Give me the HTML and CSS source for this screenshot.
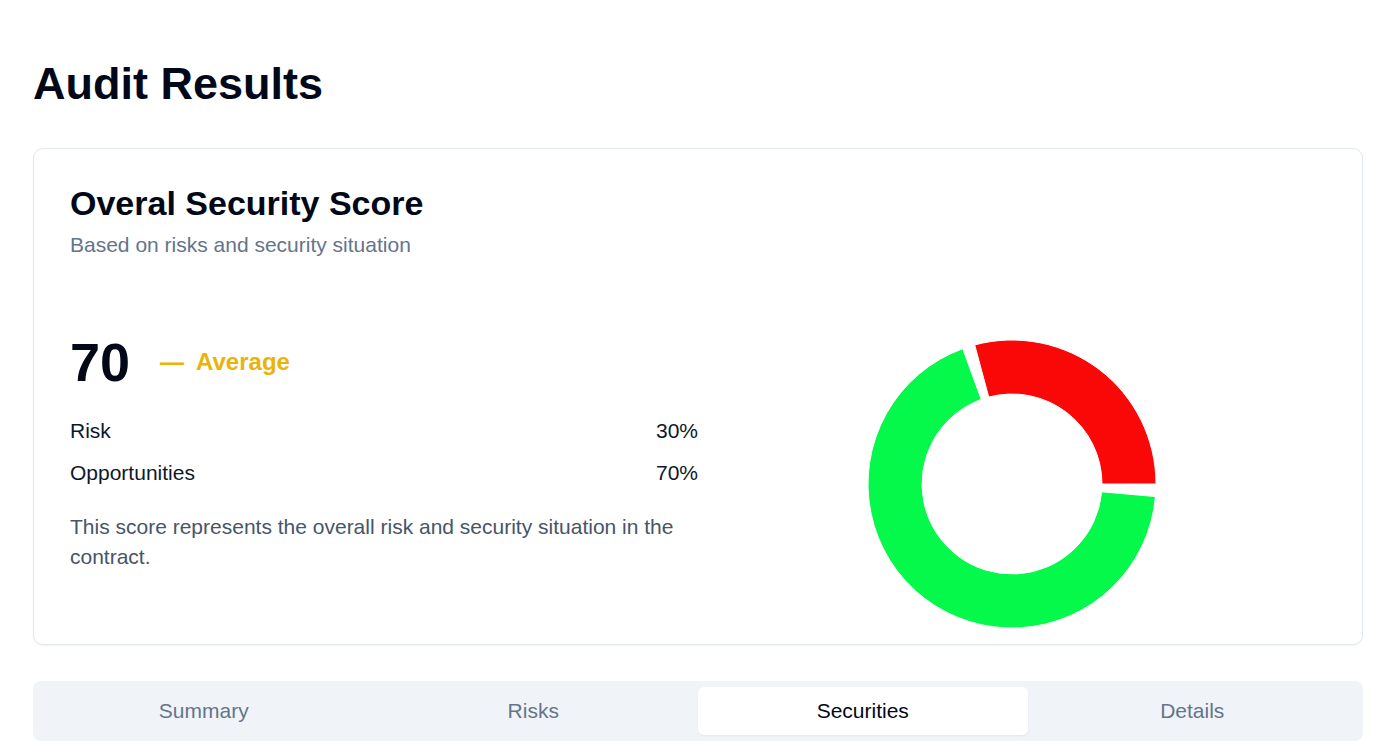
FILE: index.html
```html
<!DOCTYPE html>
<html lang="en">
<head>
<meta charset="utf-8">
<title>Audit Results</title>
<link rel="stylesheet" href="styles.css">
</head>
<body>
<main class="page">
  <h1 class="page-title">Audit Results</h1>
  <section class="card">
    <header class="card-header">
      <h2 class="card-title">Overal Security Score</h2>
      <p class="card-subtitle">Based on risks and security situation</p>
    </header>
    <div class="card-content">
      <div class="score-col">
        <div class="score-row">
          <span class="score-value">70</span>
          <span class="score-label"><span class="score-dash">—</span><span>Average</span></span>
        </div>
        <div class="stats">
          <div class="stat-row"><span>Risk</span><span>30%</span></div>
          <div class="stat-row"><span>Opportunities</span><span>70%</span></div>
        </div>
        <p class="score-desc">This score represents the overall risk and security situation in the contract.</p>
      </div>
      <div class="chart-col">
        <svg class="donut" width="300" height="300" viewBox="0 0 300 300" aria-label="Risk 30%, Opportunities 70%">
          <path class="slice-risk" d="M294,150 A144,144 0 0 0 112.73,10.91 L126.71,63.07 A90,90 0 0 1 240,150 Z"/>
          <path class="slice-opp" d="M100.75,14.68 A144,144 0 1 0 293.45,162.55 L239.66,157.84 A90,90 0 1 1 119.22,65.43 Z"/>
        </svg>
      </div>
    </div>
  </section>
  <nav class="tabs">
    <button class="tab">Summary</button>
    <button class="tab">Risks</button>
    <button class="tab tab-active">Securities</button>
    <button class="tab">Details</button>
  </nav>
</main>
</body>
</html>
```
FILE: styles.css
```css
* { box-sizing: border-box; }
html, body { margin: 0; padding: 0; background: #ffffff; }
body {
  font-family: "Liberation Sans", Arial, sans-serif;
  color: #020817;
  overflow: hidden;
}
.page {
  padding: 59px 31px 0 33px;
}
.page-title {
  margin: 0;
  font-size: 45px;
  line-height: 50px;
  font-weight: 700;
  color: #020817;
}
.card {
  margin-top: 39px;
  border: 1px solid #e2e8f0;
  border-radius: 10px;
  box-shadow: 0 1px 2px rgba(0,0,0,0.05);
  padding: 34px 36px 10px 36px;
  background: #fff;
}
.card-title {
  margin: 0;
  font-size: 34px;
  line-height: 40px;
  font-weight: 700;
  color: #020817;
}
.card-subtitle {
  margin: 8px 0 0 0;
  font-size: 21px;
  line-height: 28px;
  color: #64748b;
}
.card-content {
  margin-top: 75px;
  display: grid;
  grid-template-columns: 1fr 1fr;
}
.score-row {
  display: flex;
  align-items: center;
  gap: 30px;
  height: 56px;
}
.score-value {
  font-size: 54px;
  line-height: 56px;
  font-weight: 700;
  color: #020817;
}
.score-label {
  display: flex;
  align-items: center;
  gap: 12px;
  font-size: 24px;
  font-weight: 700;
  color: #eab308;
}
.stats {
  margin-top: 27px;
  display: flex;
  flex-direction: column;
  gap: 14px;
}
.stat-row {
  display: flex;
  justify-content: space-between;
  font-size: 21px;
  line-height: 28px;
  color: #0f172a;
}
.score-desc {
  margin: 25px 0 0 0;
  font-size: 21px;
  line-height: 30px;
  color: #475569;
}
.chart-col {
  display: flex;
  justify-content: center;
}
.donut { display: block; }
.slice-risk { fill: #fa0808; stroke: #fff; stroke-width: 1; }
.slice-opp { fill: #05f94a; stroke: #fff; stroke-width: 1; }
.tabs {
  margin-top: 36px;
  display: grid;
  grid-template-columns: repeat(4, 1fr);
  padding: 6px;
  background: #f0f4f8;
  border-radius: 8px;
}
.tab {
  border: 0;
  background: transparent;
  font-family: "Liberation Sans", Arial, sans-serif;
  font-size: 21px;
  line-height: 28px;
  padding: 10px 12px;
  color: #64748b;
  border-radius: 6px;
  cursor: pointer;
}
.tab-active {
  background: #ffffff;
  color: #020817;
  box-shadow: 0 1px 2px rgba(0,0,0,0.05);
}
```
